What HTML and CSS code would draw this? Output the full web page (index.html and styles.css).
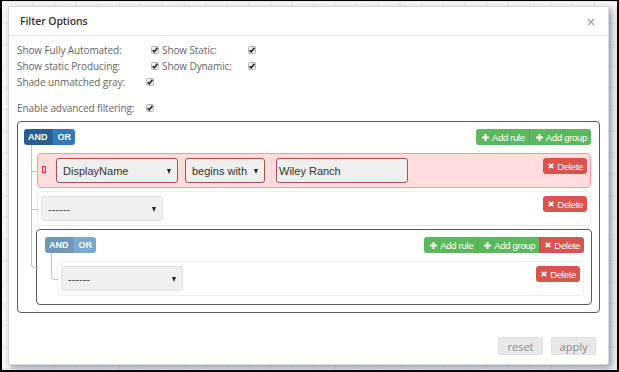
FILE: index.html
```html
<!DOCTYPE html>
<html>
<head>
<meta charset="utf-8">
<link rel="stylesheet" href="styles.css">
</head>
<body>
<div class="screen">
  <div class="modal">
    <div class="modal-header">
      <h4 class="title">Filter Options</h4>
      <span class="close"><svg width="8" height="8" viewBox="0 0 8 8"><path d="M1 1L7 7M7 1L1 7" stroke="#a0a0a0" stroke-width="1.4"/></svg></span>
    </div>
    <div class="modal-body">
      <div class="opt-row">
        <span class="lbl w1">Show Fully Automated:</span><span class="cb"><svg width="8" height="8" viewBox="0 0 8 8"><rect x="0.5" y="0.5" width="7" height="7" rx="1" fill="#ececec" stroke="#b5b5b5"/><path d="M1.6 4.2L3.2 5.8L6.5 1.8" fill="none" stroke="#222" stroke-width="1.5"/></svg></span><span class="lbl w2">Show Static:</span><span class="cb"><svg width="8" height="8" viewBox="0 0 8 8"><rect x="0.5" y="0.5" width="7" height="7" rx="1" fill="#ececec" stroke="#b5b5b5"/><path d="M1.6 4.2L3.2 5.8L6.5 1.8" fill="none" stroke="#222" stroke-width="1.5"/></svg></span>
      </div>
      <div class="opt-row">
        <span class="lbl w1">Show static Producing:</span><span class="cb"><svg width="8" height="8" viewBox="0 0 8 8"><rect x="0.5" y="0.5" width="7" height="7" rx="1" fill="#ececec" stroke="#b5b5b5"/><path d="M1.6 4.2L3.2 5.8L6.5 1.8" fill="none" stroke="#222" stroke-width="1.5"/></svg></span><span class="lbl w2">Show Dynamic:</span><span class="cb"><svg width="8" height="8" viewBox="0 0 8 8"><rect x="0.5" y="0.5" width="7" height="7" rx="1" fill="#ececec" stroke="#b5b5b5"/><path d="M1.6 4.2L3.2 5.8L6.5 1.8" fill="none" stroke="#222" stroke-width="1.5"/></svg></span>
      </div>
      <div class="opt-row">
        <span class="lbl w3">Shade unmatched gray:</span><span class="cb"><svg width="8" height="8" viewBox="0 0 8 8"><rect x="0.5" y="0.5" width="7" height="7" rx="1" fill="#ececec" stroke="#b5b5b5"/><path d="M1.6 4.2L3.2 5.8L6.5 1.8" fill="none" stroke="#222" stroke-width="1.5"/></svg></span>
      </div>
      <div class="opt-row adv">
        <span class="lbl w3">Enable advanced filtering:</span><span class="cb"><svg width="8" height="8" viewBox="0 0 8 8"><rect x="0.5" y="0.5" width="7" height="7" rx="1" fill="#ececec" stroke="#b5b5b5"/><path d="M1.6 4.2L3.2 5.8L6.5 1.8" fill="none" stroke="#222" stroke-width="1.5"/></svg></span>
      </div>

      <div class="group outer">
        <div class="group-header">
          <div class="btn-group">
            <span class="btn cond active">AND</span><span class="btn cond">OR</span>
          </div>
          <div class="btn-group">
            <span class="btn green"><svg class="ic" width="7" height="7" viewBox="0 0 7 7"><path d="M3.5 0V7M0 3.5H7" stroke="#fff" stroke-width="2"/></svg>Add rule</span><span class="btn green"><svg class="ic" width="7" height="7" viewBox="0 0 7 7"><path d="M3.5 0V7M0 3.5H7" stroke="#fff" stroke-width="2"/></svg>Add group</span>
          </div>
        </div>
        <ul class="rules-list">
          <li class="rule error">
            <span class="err-icon"></span>
            <span class="select s-field">DisplayName<i class="caret"></i></span>
            <span class="select s-op">begins with<i class="caret"></i></span>
            <span class="value-wrap"><span class="input">Wiley Ranch</span></span>
            <span class="btn red del"><svg class="ic" width="6" height="6" viewBox="0 0 6 6"><path d="M0.8 0.8L5.2 5.2M5.2 0.8L0.8 5.2" stroke="#fff" stroke-width="1.8"/></svg>Delete</span>
          </li>
          <li class="rule">
            <span class="select s-field plain">------<i class="caret"></i></span>
            <span class="btn red del"><svg class="ic" width="6" height="6" viewBox="0 0 6 6"><path d="M0.8 0.8L5.2 5.2M5.2 0.8L0.8 5.2" stroke="#fff" stroke-width="1.8"/></svg>Delete</span>
          </li>
          <li class="group inner">
            <div class="group-header">
              <div class="btn-group disabled">
                <span class="btn cond active">AND</span><span class="btn cond">OR</span>
              </div>
              <div class="btn-group">
                <span class="btn green"><svg class="ic" width="7" height="7" viewBox="0 0 7 7"><path d="M3.5 0V7M0 3.5H7" stroke="#fff" stroke-width="2"/></svg>Add rule</span><span class="btn green"><svg class="ic" width="7" height="7" viewBox="0 0 7 7"><path d="M3.5 0V7M0 3.5H7" stroke="#fff" stroke-width="2"/></svg>Add group</span><span class="btn red"><svg class="ic" width="6" height="6" viewBox="0 0 6 6"><path d="M0.8 0.8L5.2 5.2M5.2 0.8L0.8 5.2" stroke="#fff" stroke-width="1.8"/></svg>Delete</span>
              </div>
            </div>
            <ul class="rules-list">
              <li class="rule">
                <span class="select s-field plain">------<i class="caret"></i></span>
                <span class="btn red del"><svg class="ic" width="6" height="6" viewBox="0 0 6 6"><path d="M0.8 0.8L5.2 5.2M5.2 0.8L0.8 5.2" stroke="#fff" stroke-width="1.8"/></svg>Delete</span>
              </li>
            </ul>
          </li>
        </ul>
      </div>
    </div>
    <div class="modal-footer">
      <span class="fbtn">reset</span>
      <span class="fbtn">apply</span>
    </div>
  </div>
</div>
</body>
</html>
```
FILE: styles.css
```css
* { box-sizing: border-box; }
html, body { margin: 0; padding: 0; }
body { width: 619px; height: 372px; overflow: hidden; background: #000; }

.screen {
  width: 619px;
  height: 372px;
  border-style: solid;
  border-color: #000;
  border-width: 1px 2px 2px 2px;
  padding: 5px 0 0 6px;
  background-color: #f4f6f9;
  background-image:
    linear-gradient(to right, rgba(170,180,205,0.22) 1px, transparent 1px),
    linear-gradient(to bottom, rgba(170,180,205,0.22) 1px, transparent 1px);
  background-size: 21.6px 21.6px;
  background-position: 9px 0;
}

.modal {
  width: 601px;
  height: 359px;
  background: #fff;
  border: 1px solid rgba(0,0,0,0.15);
  border-radius: 2px;
  box-shadow: 3px 3px 6px rgba(40,50,70,0.45);
  display: flex;
  flex-direction: column;
  font-family: "Open Sans", "Noto Sans", sans-serif;
}

.modal-header {
  height: 29px;
  border-bottom: 1px solid #e5e5e5;
  display: flex;
  align-items: center;
  justify-content: space-between;
  padding: 0 13px 0 11px;
}
.title {
  margin: 0;
  font-size: 10.5px;
  font-weight: 600;
  color: #333;
  letter-spacing: -0.1px;
}
.close { display: flex; padding-top: 1px; }

.modal-body {
  padding: 6px 8px 0 8px;
}
.opt-row {
  height: 16px;
  display: flex;
  align-items: center;
  font-size: 10px;
  color: #666;
  letter-spacing: -0.1px;
}
.opt-row.adv { margin-top: 10px; }
.lbl { display: block; white-space: nowrap; }
.w1 { width: 134px; }
.w2 { width: 89px; padding-left: 3px; }
.w3 { width: 129px; }
.cb { display: flex; width: 8px; height: 8px; }

/* query builder */
.group {
  font-family: "Liberation Sans", Arial, sans-serif;
  border: 1px solid #5a5a5a;
  border-radius: 4px;
  background: #fff;
}
.group.outer {
  margin-top: 5px;
  padding: 7px 8px 7px 6px;
}
.group.inner {
  margin: 3px -1px 0 -1px;
  padding: 7px 7px 8px 8px;
  position: relative;
}
.group-header {
  display: flex;
  justify-content: space-between;
  height: 16px;
}
.btn-group { display: flex; }
.btn-group.disabled { opacity: 0.65; }
.btn {
  display: flex;
  align-items: center;
  height: 16px;
  padding: 0 5px;
  font-size: 9.5px;
  letter-spacing: -0.3px;
  color: #fff;
  white-space: nowrap;
}
.btn-group .btn:first-child { border-radius: 3px 0 0 3px; }
.btn-group .btn:last-child { border-radius: 0 3px 3px 0; }
.btn-group .btn + .btn { border-left: 1px solid rgba(0,0,0,0.08); }
.cond { font-weight: bold; padding: 0 4px 0 5px; background: #337ab7; letter-spacing: 0; font-size: 9px; }
.cond.active { background: #285f90; padding: 0 4px 0 4px; }
.green { background: #5cb85c; padding: 0 4px 0 6px; }
.red { background: #d9534f; padding: 0 4px 0 5px; }
.btn.del { border-radius: 3px; margin-left: auto; }
.ic { margin-right: 3px; flex: none; }

.rules-list {
  list-style: none;
  margin: 8px 0 0 0;
  padding: 0 0 0 13px;
}
.group.inner .rules-list { padding-left: 12px; }
.rules-list > li { position: relative; }
.rules-list > li::before {
  content: "";
  position: absolute;
  left: -7px;
  top: -9px;
  width: 6px;
  height: calc(50% + 9px);
  border-left: 1px solid #c4c4c4;
  border-bottom: 1px solid #c4c4c4;
}
.rules-list > li::after {
  content: "";
  position: absolute;
  left: -7px;
  top: 50%;
  height: 50%;
  width: 6px;
  border-left: 1px solid #c4c4c4;
}
.rules-list > li:last-child::after { display: none; }
.rules-list > li:last-child::before { border-bottom-left-radius: 4px; }
.group.inner::before { left: -6px; width: 6px; }
.group.inner::after { left: -6px; }

.rule {
  display: flex;
  align-items: flex-start;
  padding: 4px 3px 4px 3px;
  border: 1px solid #eee;
  border-radius: 4px;
  background: #fff;
  margin-top: 3px;
}
.rules-list > li:first-child { margin-top: 0; }
.rule.error { background: #fdd; border-color: #f99; }

.err-icon {
  width: 4px;
  height: 7px;
  border: 1px solid #e23b3b;
  margin: 8px 10px 0 1px;
  flex: none;
}
.select {
  position: relative;
  display: flex;
  align-items: center;
  height: 25px;
  background: #efefef;
  border: 1px solid #ccc;
  border-radius: 3px;
  font-size: 11px;
  color: #333;
  padding-left: 6px;
  flex: none;
}
.rule.error .select, .rule.error .input { border-color: #a55252; }
.select.plain { border-color: #e2e2e2; color: #444; }
.s-field { width: 122px; }
.s-op { width: 80px; margin-left: 7px; }
.caret {
  position: absolute;
  right: 6px;
  top: 10px;
  width: 0;
  height: 0;
  border-left: 2.5px solid transparent;
  border-right: 2.5px solid transparent;
  border-top: 5px solid #222;
}
.value-wrap {
  display: flex;
  margin-left: 6px;
  border-left: 1px solid #ddd;
  padding-left: 4px;
  height: 25px;
}
.input {
  display: flex;
  align-items: center;
  width: 132px;
  height: 25px;
  background: #efefef;
  border: 1px solid #ccc;
  border-radius: 3px;
  font-size: 11px;
  color: #333;
  padding-left: 2px;
}

.modal-footer {
  margin-top: auto;
  display: flex;
  justify-content: flex-end;
  gap: 8px;
  padding: 0 12px 9px 0;
}
.fbtn {
  display: flex;
  align-items: center;
  justify-content: center;
  width: 45px;
  height: 18px;
  background: #e8e8e8;
  border: 1px solid #e0e0e0;
  border-radius: 2px;
  color: #8a8a8a;
  font-size: 11px;
}
```
